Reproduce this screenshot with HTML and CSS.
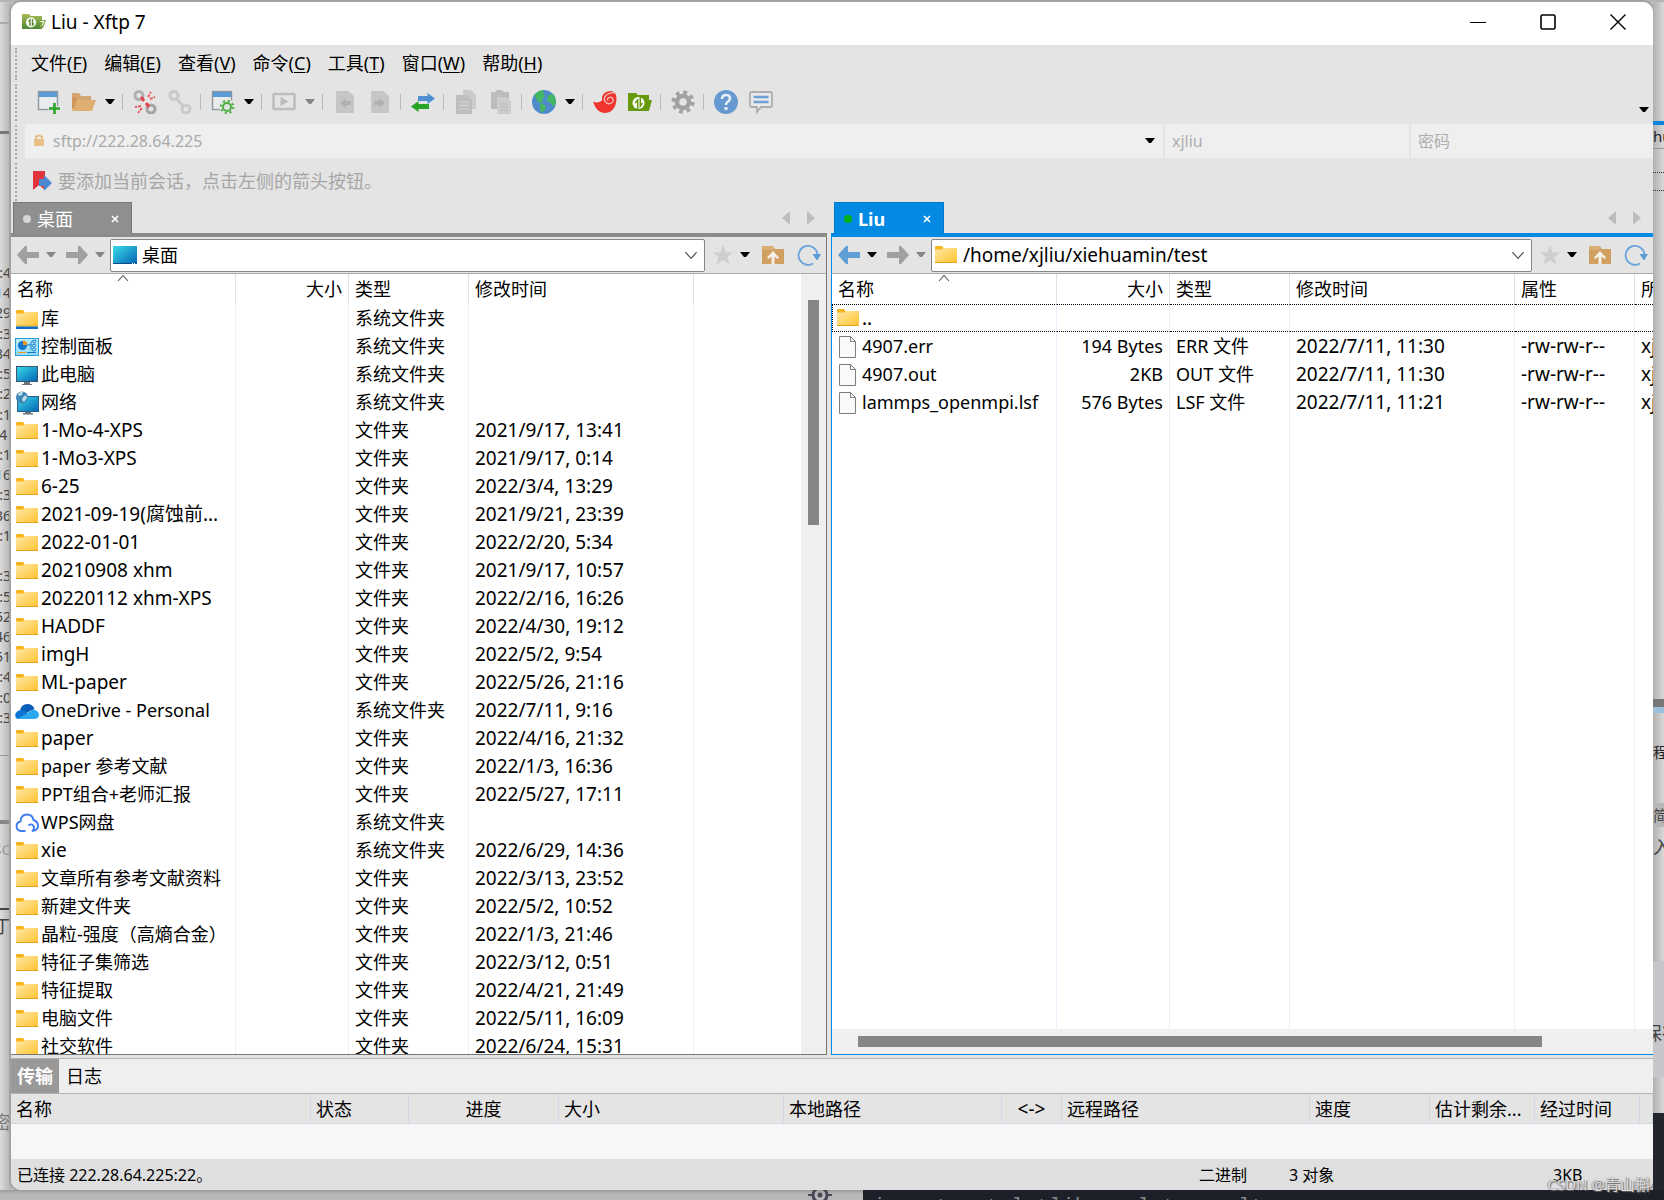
FILE: index.html
```html
<!DOCTYPE html>
<html lang="zh-CN">
<head>
<meta charset="utf-8">
<title>Liu - Xftp 7</title>
<meta name="viewport" content="width=device-width, initial-scale=1">
<link rel="stylesheet" href="styles.css">
</head>
<body>
<svg class="defs" width="0" height="0" aria-hidden="true">
  <defs>
    <linearGradient id="gFolder" x1="0" y1="0" x2="1" y2="1"><stop offset="0" stop-color="#ffe8a6"/><stop offset="1" stop-color="#fdc32f"/></linearGradient>
    <linearGradient id="gScreen" x1="0" y1="0" x2="1" y2="1"><stop offset="0" stop-color="#38dbe8"/><stop offset="1" stop-color="#0563b5"/></linearGradient>
    <linearGradient id="gPanel" x1="0" y1="0" x2="0" y2="1"><stop offset="0" stop-color="#b7ecfc"/><stop offset="1" stop-color="#8fdcf8"/></linearGradient>
    <linearGradient id="gApp" x1="0" y1="0" x2="0" y2="1"><stop offset="0" stop-color="#a9bf5a"/><stop offset="1" stop-color="#4e8634"/></linearGradient>
  </defs>
  <symbol id="folder" viewBox="0 0 24 24"><path d="M1 4q0-1 1-1h6l1.500 2v5H1z" fill="#f5b31c"/><path d="M1 6.500h7L9.500 5H23v15H1z" fill="url(#gFolder)"/><path d="M1 19.500h22" stroke="#e8a41d"/></symbol>
  <symbol id="library" viewBox="0 0 24 24"><path d="M1 4q0-1 1-1h6l1.500 2v5H1z" fill="#f5b31c"/><path d="M1 6.500h7L9.500 5H23v14H1z" fill="url(#gFolder)"/><path d="M1 19h22" stroke="#e8a41d"/><path d="M1 19.500h22V22H1z" fill="#0a6cc4"/></symbol>
  <symbol id="panel" viewBox="0 0 24 24"><rect x=".5" y="3.500" width="23" height="17" fill="url(#gPanel)" stroke="#2a9ddd"/><circle cx="7.500" cy="10.500" r="4.500" fill="#1477cf"/><path d="M8 10V5.500a4.500 4.500 0 0 1 4.500 4.500z" fill="#f5951d"/><path d="M12 10h3l2-4h4M16 9v6" stroke="#1477cf" fill="none"/><circle cx="19.500" cy="6.500" r="1.500" fill="#b7ecfc" stroke="#1477cf"/><circle cx="19" cy="10.500" r="1.500" fill="#b7ecfc" stroke="#1477cf"/><circle cx="19" cy="14.500" r="1.500" fill="#b7ecfc" stroke="#1477cf"/><path d="M3 17.500h8" stroke="#f5951d"/><path d="M12 17.500h9" stroke="#1477cf"/></symbol>
  <symbol id="computer" viewBox="0 0 24 24"><path d="M9 18h6v3h2v1H7v-1h2z" fill="#6b7681"/><rect x="1.500" y="3.500" width="21" height="15" fill="url(#gScreen)" stroke="#3c566b"/></symbol>
  <symbol id="network" viewBox="0 0 24 24"><path d="M10 20h6v2h2v1.500H8V22h2z" fill="#6b7681"/><rect x="2.500" y="5.500" width="21" height="15" fill="url(#gScreen)" stroke="#2b5d85"/><circle cx="7" cy="6.500" r="6" fill="#3f87b5"/><path d="M3 3q3-3 5-2l-1 3-3 1zM8 6l3-2 1 3-3 4-2-2z" fill="#c2dfec"/></symbol>
  <symbol id="onedrive" viewBox="0 0 24 24"><path d="M5 12q1-7 7.500-7 5 0 7 5l-8 4z" fill="#0a5fb8"/><path d="M1 19q-2-4 1-6.500 3-2.500 7-1l7 5-8 3.500H4q-2 0-3-1z" fill="#1076d6"/><path d="M3 19.500 16 12q2-2 5-.5 3 1.500 3 4.500-.5 4-5 4H5z" fill="#2aa7ee"/></symbol>
  <symbol id="wps" viewBox="0 0 24 24"><path d="M10.500 20H6a4.800 4.800 0 0 1-.500-9.500Q6 3.500 12 3.500q5.500 0 6.500 5.500 4.500 1.500 4.500 6 0 4.500-6 5 3-2 1.500-5-2-3-5-.5" fill="none" stroke="#3f7df0" stroke-width="1.900"/></symbol>
  <symbol id="file" viewBox="0 0 24 24"><path d="M3.500 1.500h11l5 5v16h-16z" fill="#fafafa" stroke="#7d7d7d"/><path d="M14.500 1.500v5h5" fill="none" stroke="#7d7d7d"/></symbol>
  <symbol id="desktop" viewBox="0 0 24 24"><path d="M0 3h24v18H0z" fill="url(#gScreen)"/><path d="M0 20.500h24" stroke="#0c4f86"/><path d="M19 20.500h4" stroke="#fff" stroke-dasharray="1 1"/></symbol>
  <symbol id="caret" viewBox="0 0 10 6"><path d="M0 0h10L6 5H4z"/></symbol>
  <symbol id="chev" viewBox="0 0 12 8"><path d="m1 1 5 5.500L11 1" fill="none" stroke="#555" stroke-width="1.100"/></symbol>
  <symbol id="up" viewBox="0 0 12 8"><path d="M1 7l5-5.500L11 7" fill="none" stroke="#555" stroke-width="1.100"/></symbol>
  <symbol id="left" viewBox="0 0 24 24"><path d="M1 12 9 3h2v6h12v6H11v6H9z"/></symbol>
  <symbol id="right" viewBox="0 0 24 24"><path d="M23 12 15 3h-2v6H1v6h12v6h2z"/></symbol>
  <symbol id="star" viewBox="0 0 24 24"><path d="m12 2 2.800 7.200 7.200.3-5.600 4.500 2 7.500-6.400-4.300L5.600 21.500l2-7.500L2 9.500l7.200-.3z" fill="#cfcfcf"/></symbol>
  <symbol id="upfolder" viewBox="0 0 24 24"><path d="M1 3h11l2 3h9v15H1z" fill="#d8ae72"/><path d="M1 7h11l2-1h9v15H1z" fill="#d19f5f"/><path d="m12 8 6 6.500-1.500 1.500-3-2.500V22h-3v-8.500l-3 2.500L6 14.500z" fill="#f4efe8"/></symbol>
  <symbol id="refresh" viewBox="0 0 24 24"><path d="M16 20.500A9.500 9.500 0 1 1 20.500 11" fill="none" stroke="#6aa3dc" stroke-width="1.800"/><path d="M15.500 11H24l-3.500 6h-1z" fill="#5b9bd8"/></symbol>
  <symbol id="x" viewBox="0 0 8 8"><path d="m1 1 6 6M7 1 1 7" stroke="currentColor" stroke-width="1.600"/></symbol>
</svg>

<div class="desk">
  <div class="edge-top"></div>
  <aside class="edge-left" aria-hidden="true">
    <div class="el-top"></div>
    <div class="el-bar"></div>
    <div class="times"><span>:4</span><span>14</span><span>29</span><span>:3</span><span>34</span><span>:5</span><span>:2</span><span>:1</span><span>4&nbsp;</span><span>:1</span><span>16</span><span>:3</span><span>36</span><span>:1</span><span></span><span>:3</span><span>:5</span><span>52</span><span>46</span><span>51</span><span>:4</span><span>:0</span><span>:3</span></div>
    <div class="el-a"></div><div class="el-b"></div><div class="el-c">SC</div><div class="el-d"></div><div class="el-e">丁</div><div class="el-f">密</div>
  </aside>

  <main class="win">
    <header class="title">
      <svg width="24" height="20" viewBox="0 0 24 20"><path d="M0 2h7l2 2h11v13H0z" fill="url(#gApp)"/><circle cx="9" cy="10.500" r="5" fill="#fff"/><path d="M8 14V8L6.500 9.500M10.500 7v6l1.500-1.500" stroke="#5d8f38" stroke-width="1.400" fill="none"/><path d="M18 8h6l-3 8h-3z" fill="#7fa545"/><path d="M18.500 9.500H22l-2 4" stroke="#fff" fill="none"/></svg>
      <h1>Liu - Xftp 7</h1>
      <div class="wctl">
        <button aria-label="最小化"><svg width="16" height="16"><path d="M0 8.500h16" stroke="#000"/></svg></button>
        <button aria-label="最大化"><svg width="16" height="16"><rect x="1" y="1" width="14" height="14" rx="1.500" fill="none" stroke="#000" stroke-width="1.600"/></svg></button>
        <button aria-label="关闭"><svg width="16" height="16"><path d="m.5.5 15 15M15.500.5l-15 15" stroke="#000" stroke-width="1.400"/></svg></button>
      </div>
    </header>

    <nav class="menu grip">
      <button>文件(<u>F</u>)</button><button>编辑(<u>E</u>)</button><button>查看(<u>V</u>)</button><button>命令(<u>C</u>)</button><button>工具(<u>T</u>)</button><button>窗口(<u>W</u>)</button><button>帮助(<u>H</u>)</button>
    </nav>

    <div class="tools grip" role="toolbar">
      <button aria-label="新建"><svg viewBox="0 0 24 24"><rect x="1.500" y="1.500" width="19" height="18" fill="#e9ecee" stroke="#8f979c" stroke-width="1.400"/><path d="M2 2h18v5H2z" fill="#5b9bd5"/><path d="M17.500 12.500v12M11.500 18.500h12" stroke="#e4e4e4" stroke-width="5"/><path d="M17.500 13v11M12 18.500h11" stroke="#28a428" stroke-width="2.600"/></svg></button>
      <button aria-label="打开"><svg viewBox="0 0 24 24"><path d="M0 3h7l2 3h10v5H0z" fill="#d3a672"/><path d="M0 7h5v12H0z" fill="#cf955a"/><path d="M5 10h19l-4 11H0z" fill="#dfae70"/></svg></button>
      <button class="dd" aria-label="打开列表"><svg class="ca"><use href="#caret"/></svg></button><i></i>
      <button aria-label="断开"><svg viewBox="0 0 24 24" fill="none"><circle cx="6" cy="5.500" r="4" stroke="#b0b0b0" stroke-width="3"/><circle cx="18" cy="19" r="4" stroke="#a4a4a4" stroke-width="3"/><path d="m8 7 3 4M13 13l3 4" stroke="#e0464b" stroke-width="3"/><path d="m15 7 3-5M17 9l5-2M8 16l-6 1M9 18l-4 5" stroke="#ea5b60" stroke-width="2" stroke-dasharray="3 1"/></svg></button>
      <button aria-label="重新连接"><svg viewBox="0 0 24 24" fill="none" stroke="#c9c9c9" stroke-width="3"><circle cx="6" cy="5.500" r="4"/><circle cx="18" cy="19" r="4"/><path d="m8 8 7 8"/></svg></button><i></i>
      <button aria-label="属性"><svg viewBox="0 0 24 24"><rect x="1.500" y="1.500" width="19" height="18" fill="#e9ecee" stroke="#8f979c" stroke-width="1.400"/><path d="M2 2h18v5H2z" fill="#5b9bd5"/><circle cx="16" cy="17" r="8" fill="#e4e4e4"/><circle cx="16" cy="17" r="4" fill="none" stroke="#4caf3f" stroke-width="2"/><circle cx="16" cy="17" r="6.200" fill="none" stroke="#4caf3f" stroke-width="2.200" stroke-dasharray="2 2.870"/></svg></button>
      <button class="dd" aria-label="属性列表"><svg class="ca"><use href="#caret"/></svg></button><i></i>
      <button aria-label="运行"><svg viewBox="0 0 24 24"><rect x="1.500" y="4" width="21" height="15" rx="1" fill="none" stroke="#bdbdbd" stroke-width="2.600"/><path d="m8.500 7 8 4.500-8 4.500z" fill="#bdbdbd"/></svg></button>
      <button class="dd dim" aria-label="运行列表"><svg class="ca"><use href="#caret"/></svg></button><i></i>
      <button aria-label="下载"><svg viewBox="0 0 24 24"><path d="M3 1h12l6 5v17H3z" fill="#c6c6c6"/><path d="M7 13l6-5v3h5v4h-5v3z" fill="#b1b1b1"/></svg></button>
      <button aria-label="上传"><svg viewBox="0 0 24 24"><path d="M3 1h12l6 5v17H3z" fill="#c6c6c6"/><path d="M17 13l-6-5v3H6v4h5v3z" fill="#b1b1b1"/></svg></button><i></i>
      <button aria-label="同步"><svg viewBox="0 0 24 24"><path d="M24 8.500 16.500 3v3H7v5h9.500v3z" fill="#4f8fd2"/><path d="M0 16.500 7.500 11v3H18v5H7.500v3z" fill="#28a428"/></svg></button><i></i>
      <button aria-label="复制"><svg viewBox="0 0 24 24"><path d="M9 0h8l5 5v14H9z" fill="#cbcbcb"/><path d="M2 5h10l6 5v14H2z" fill="#bfbfbf"/><path d="M5 12h10M5 15.500h10M5 19h10" stroke="#d6d6d6"/></svg></button>
      <button aria-label="粘贴"><svg viewBox="0 0 24 24"><path d="M2 2h4l2-2h5l2 2h5v17H2z" fill="#bcbcbc"/><path d="M8 7h9l5 4v13H8z" fill="#cdcdcd"/><path d="M11 14h8M11 17h8M11 20h8" stroke="#b9b9b9"/></svg></button><i></i>
      <button aria-label="语言"><svg viewBox="0 0 24 24"><circle cx="12" cy="12" r="12" fill="#4f8acb"/><path d="M2.500 4.500Q7 0 12 0l-1 3 2 3-3 3 1 2-2 2-4-2zM16 6l4-2 2 1q2 4 2 8l-3 4-2-4-4-2zM8 13l5 2 1 4-4 4-2-4z" fill="#45b764"/></svg></button>
      <button class="dd" aria-label="语言列表"><svg class="ca"><use href="#caret"/></svg></button><i></i>
      <button aria-label="Xshell"><svg viewBox="0 0 24 24"><path d="M0 11.500q5 2.500 9-1Q8 2 17 1q7 0 6.500 9Q22 23 11 23 3 22 0 11.500z" fill="#ee342c"/><path d="M23 3q-5-1-9 1.500-4 3-2 7 2 3 5.500 2 3.500-1.500 2.500-4.500-1.500-2.500-4-1.500-2 1-1 3" fill="none" stroke="#f0c0bd" stroke-width="1.300"/></svg></button>
      <button aria-label="Xftp"><svg viewBox="0 0 24 24"><path d="M0 3h8l2 2h11v5h3l-3 11H0z" fill="#669a0c"/><circle cx="10.500" cy="13" r="6" fill="#fff"/><path d="M9.700 19.500V10L7 13M12.300 6.500V16l2.200-3" fill="none" stroke="#669a0c" stroke-width="1.500"/></svg></button><i></i>
      <button aria-label="选项"><svg viewBox="0 0 24 24" fill="none" stroke="#a1a1a1"><circle cx="12" cy="12" r="6" stroke-width="4.500"/><circle cx="12" cy="12" r="9.800" stroke-width="3.500" stroke-dasharray="3.800 3.900"/></svg></button><i></i>
      <button aria-label="帮助"><svg viewBox="0 0 24 24"><circle cx="12" cy="12" r="12" fill="#6699cf"/><path d="M8 9q0-4 4-4t4 3.500q0 2-2.500 3.500-1.500 1-1.500 3" fill="none" stroke="#e6eef6" stroke-width="2.600"/><path d="M10.500 17h3v3h-3z" fill="#e6eef6"/></svg></button>
      <button aria-label="反馈"><svg viewBox="0 0 24 24"><path d="M3 2h18q2 0 2 2v11q0 2-2 2H12l-4 5v-5H3q-2 0-2-2V4q0-2 2-2z" fill="#e9e9e9" stroke="#adadad" stroke-width="1.800"/><path d="M4.500 7h15M4.500 12h15" stroke="#6fa0d6" stroke-width="2.600"/></svg></button>
      <button class="dd more" aria-label="更多"><svg class="ca"><use href="#caret"/></svg></button>
    </div>

    <form class="addr grip">
      <label class="host"><svg width="12" height="14" viewBox="0 0 12 14"><path d="M3 6V4q0-2.500 3-2.500T9 4v2" fill="none" stroke="#e6bd83" stroke-width="2"/><rect x="1" y="5" width="10" height="7" rx="1" fill="#e8bf84"/></svg><input aria-label="主机" value="sftp://222.28.64.225"><svg class="ca"><use href="#caret"/></svg></label>
      <input class="user" aria-label="用户名" value="xjliu">
      <input class="pass" aria-label="密码" placeholder="密码">
    </form>

    <div class="hint grip"><svg width="20" height="22" viewBox="0 0 20 22"><path d="M1 1h12v19l-6-5-6 5z" fill="#e0343c"/><path d="M7 9h5V5l8 8-8 8v-5H7z" fill="#4a88cf"/></svg><span>要添加当前会话，点击左侧的箭头按钮。</span></div>

    <div class="panes">
      <section class="pane local">
        <div class="tabs"><div class="tab"><span class="dot"></span><span>桌面</span><button aria-label="关闭标签"><svg width="8" height="8"><use href="#x"/></svg></button></div>
          <div class="tnav"><svg width="8" height="14"><path d="M8 0v14L0 7z"/></svg><svg width="8" height="14"><path d="M0 0v14l8-7z"/></svg></div></div>
        <div class="path">
          <button class="gray" aria-label="后退"><svg class="ic"><use href="#left"/></svg></button><button class="dd dim" aria-label="后退列表"><svg class="ca"><use href="#caret"/></svg></button>
          <button class="gray fw" aria-label="前进"><svg class="ic"><use href="#right"/></svg></button><button class="dd dim" aria-label="前进列表"><svg class="ca"><use href="#caret"/></svg></button>
          <label class="combo"><svg class="ic"><use href="#desktop"/></svg><select aria-label="本地路径"><option>桌面</option></select><svg class="ch"><use href="#chev"/></svg></label>
          <button aria-label="收藏"><svg class="ic"><use href="#star"/></svg></button><button class="dd fav" aria-label="收藏列表"><svg class="ca"><use href="#caret"/></svg></button>
          <button class="upb" aria-label="上一级"><svg class="ic"><use href="#upfolder"/></svg></button><button class="rf" aria-label="刷新"><svg class="ic"><use href="#refresh"/></svg></button>
        </div>
        <div class="list">
          <div class="scroller">
          <table>
            <colgroup><col class="w-name"><col class="w-size"><col class="w-type"><col class="w-time"><col></colgroup>
            <thead><tr><th>名称<svg class="sort"><use href="#up"/></svg></th><th class="r">大小</th><th>类型</th><th>修改时间</th><th></th></tr></thead>
            <tbody>
              <tr><td><svg class="ic"><use href="#library"/></svg>库</td><td></td><td>系统文件夹</td><td class="n"></td><td></td></tr>
              <tr><td><svg class="ic"><use href="#panel"/></svg>控制面板</td><td></td><td>系统文件夹</td><td class="n"></td><td></td></tr>
              <tr><td><svg class="ic"><use href="#computer"/></svg>此电脑</td><td></td><td>系统文件夹</td><td class="n"></td><td></td></tr>
              <tr><td><svg class="ic"><use href="#network"/></svg>网络</td><td></td><td>系统文件夹</td><td class="n"></td><td></td></tr>
              <tr><td class="n"><svg class="ic"><use href="#folder"/></svg>1-Mo-4-XPS</td><td></td><td>文件夹</td><td class="n">2021/9/17, 13:41</td><td></td></tr>
              <tr><td class="n"><svg class="ic"><use href="#folder"/></svg>1-Mo3-XPS</td><td></td><td>文件夹</td><td class="n">2021/9/17, 0:14</td><td></td></tr>
              <tr><td class="n"><svg class="ic"><use href="#folder"/></svg>6-25</td><td></td><td>文件夹</td><td class="n">2022/3/4, 13:29</td><td></td></tr>
              <tr><td class="n"><svg class="ic"><use href="#folder"/></svg>2021-09-19(腐蚀前...</td><td></td><td>文件夹</td><td class="n">2021/9/21, 23:39</td><td></td></tr>
              <tr><td class="n"><svg class="ic"><use href="#folder"/></svg>2022-01-01</td><td></td><td>文件夹</td><td class="n">2022/2/20, 5:34</td><td></td></tr>
              <tr><td class="n"><svg class="ic"><use href="#folder"/></svg>20210908 xhm</td><td></td><td>文件夹</td><td class="n">2021/9/17, 10:57</td><td></td></tr>
              <tr><td class="n"><svg class="ic"><use href="#folder"/></svg>20220112 xhm-XPS</td><td></td><td>文件夹</td><td class="n">2022/2/16, 16:26</td><td></td></tr>
              <tr><td class="n"><svg class="ic"><use href="#folder"/></svg>HADDF</td><td></td><td>文件夹</td><td class="n">2022/4/30, 19:12</td><td></td></tr>
              <tr><td class="n"><svg class="ic"><use href="#folder"/></svg>imgH</td><td></td><td>文件夹</td><td class="n">2022/5/2, 9:54</td><td></td></tr>
              <tr><td class="n"><svg class="ic"><use href="#folder"/></svg>ML-paper</td><td></td><td>文件夹</td><td class="n">2022/5/26, 21:16</td><td></td></tr>
              <tr><td><svg class="ic"><use href="#onedrive"/></svg>OneDrive - Personal</td><td></td><td>系统文件夹</td><td class="n">2022/7/11, 9:16</td><td></td></tr>
              <tr><td class="n"><svg class="ic"><use href="#folder"/></svg>paper</td><td></td><td>文件夹</td><td class="n">2022/4/16, 21:32</td><td></td></tr>
              <tr><td><svg class="ic"><use href="#folder"/></svg>paper 参考文献</td><td></td><td>文件夹</td><td class="n">2022/1/3, 16:36</td><td></td></tr>
              <tr><td><svg class="ic"><use href="#folder"/></svg>PPT组合+老师汇报</td><td></td><td>文件夹</td><td class="n">2022/5/27, 17:11</td><td></td></tr>
              <tr><td><svg class="ic"><use href="#wps"/></svg>WPS网盘</td><td></td><td>系统文件夹</td><td class="n"></td><td></td></tr>
              <tr><td class="n"><svg class="ic"><use href="#folder"/></svg>xie</td><td></td><td>系统文件夹</td><td class="n">2022/6/29, 14:36</td><td></td></tr>
              <tr><td><svg class="ic"><use href="#folder"/></svg>文章所有参考文献资料</td><td></td><td>文件夹</td><td class="n">2022/3/13, 23:52</td><td></td></tr>
              <tr><td><svg class="ic"><use href="#folder"/></svg>新建文件夹</td><td></td><td>文件夹</td><td class="n">2022/5/2, 10:52</td><td></td></tr>
              <tr><td><svg class="ic"><use href="#folder"/></svg>晶粒-强度（高熵合金）</td><td></td><td>文件夹</td><td class="n">2022/1/3, 21:46</td><td></td></tr>
              <tr><td><svg class="ic"><use href="#folder"/></svg>特征子集筛选</td><td></td><td>文件夹</td><td class="n">2022/3/12, 0:51</td><td></td></tr>
              <tr><td><svg class="ic"><use href="#folder"/></svg>特征提取</td><td></td><td>文件夹</td><td class="n">2022/4/21, 21:49</td><td></td></tr>
              <tr><td><svg class="ic"><use href="#folder"/></svg>电脑文件</td><td></td><td>文件夹</td><td class="n">2022/5/11, 16:09</td><td></td></tr>
              <tr><td><svg class="ic"><use href="#folder"/></svg>社交软件</td><td></td><td>文件夹</td><td class="n">2022/6/24, 15:31</td><td></td></tr>
            </tbody>
          </table>
          </div>
          <div class="vbar"><div></div></div>
        </div>
      </section>

      <section class="pane remote">
        <div class="tabs"><div class="tab"><span class="dot"></span><b>Liu</b><button aria-label="关闭标签"><svg width="8" height="8"><use href="#x"/></svg></button></div>
          <div class="tnav"><svg width="8" height="14"><path d="M8 0v14L0 7z"/></svg><svg width="8" height="14"><path d="M0 0v14l8-7z"/></svg></div></div>
        <div class="path">
          <button class="blue" aria-label="后退"><svg class="ic"><use href="#left"/></svg></button><button class="dd" aria-label="后退列表"><svg class="ca"><use href="#caret"/></svg></button>
          <button class="gray fw" aria-label="前进"><svg class="ic"><use href="#right"/></svg></button><button class="dd dim" aria-label="前进列表"><svg class="ca"><use href="#caret"/></svg></button>
          <label class="combo"><svg class="ic"><use href="#folder"/></svg><select class="n" aria-label="远程路径"><option>/home/xjliu/xiehuamin/test</option></select><svg class="ch"><use href="#chev"/></svg></label>
          <button aria-label="收藏"><svg class="ic"><use href="#star"/></svg></button><button class="dd fav" aria-label="收藏列表"><svg class="ca"><use href="#caret"/></svg></button>
          <button class="upb" aria-label="上一级"><svg class="ic"><use href="#upfolder"/></svg></button><button class="rf" aria-label="刷新"><svg class="ic"><use href="#refresh"/></svg></button>
        </div>
        <div class="list col">
          <div class="scroller">
          <table class="fill">
            <colgroup><col class="w-name"><col class="w-size"><col class="w-type"><col class="w-time"><col class="w-attr"><col></colgroup>
            <thead><tr><th>名称<svg class="sort"><use href="#up"/></svg></th><th class="r">大小</th><th>类型</th><th>修改时间</th><th>属性</th><th class="cut">所有者</th></tr></thead>
            <tbody>
              <tr class="focus"><td class="n"><svg class="ic"><use href="#folder"/></svg>..</td><td></td><td></td><td></td><td></td><td></td></tr>
              <tr><td><svg class="ic"><use href="#file"/></svg>4907.err</td><td class="r">194 Bytes</td><td>ERR 文件</td><td class="n">2022/7/11, 11:30</td><td class="n">-rw-rw-r--</td><td class="n">xjliu</td></tr>
              <tr><td><svg class="ic"><use href="#file"/></svg>4907.out</td><td class="r">2KB</td><td>OUT 文件</td><td class="n">2022/7/11, 11:30</td><td class="n">-rw-rw-r--</td><td class="n">xjliu</td></tr>
              <tr><td><svg class="ic"><use href="#file"/></svg>lammps_openmpi.lsf</td><td class="r">576 Bytes</td><td>LSF 文件</td><td class="n">2022/7/11, 11:21</td><td class="n">-rw-rw-r--</td><td class="n">xjliu</td></tr>
              <tr class="rest"><td></td><td></td><td></td><td></td><td></td><td></td></tr>
            </tbody>
          </table>
          </div>
          <div class="hbar"><div></div></div>
        </div>
      </section>
    </div>

    <section class="transfer">
      <div class="ttabs"><button class="on">传输</button><button>日志</button></div>
      <table>
        <colgroup><col class="t1"><col class="t2"><col class="t3"><col class="t4"><col class="t5"><col class="t6"><col class="t7"><col class="t8"><col class="t9"><col class="t9"><col></colgroup>
        <thead><tr><th>名称</th><th>状态</th><th class="c">进度</th><th>大小</th><th>本地路径</th><th class="c n">&lt;-&gt;</th><th>远程路径</th><th>速度</th><th>估计剩余...</th><th>经过时间</th><th></th></tr></thead>
      </table>
      <div class="empty"></div>
    </section>

    <footer class="status"><span class="s0">已连接 222.28.64.225:22。</span><span class="s1">二进制</span><span class="s2">3 对象</span><span class="s3">3KB</span></footer>
  </main>

  <aside class="edge-right" aria-hidden="true">
    <div class="er-a"></div><div class="er-b">huamin</div><div class="er-c"></div><div class="er-c2"></div><div class="er-d"></div><div class="er-e">程路径</div><div class="er-f"></div><div class="er-g">简</div><div class="er-h">入</div><div class="er-i">保存</div><div class="er-j"></div><div class="er-k"></div>
  </aside>
  <div class="edge-bottom" aria-hidden="true">
    <div class="eb-l"><svg width="24" height="24" viewBox="0 0 24 24"><circle cx="12" cy="5" r="7" fill="none" stroke="#474756" stroke-width="3"/><circle cx="12" cy="5" r="2.500" fill="#474756"/><path d="M0 5h5M19 5h5" stroke="#474756" stroke-width="2"/></svg></div>
    <div class="eb-r">import matplotlib.pyplot as plt</div>
  </div>
  <div class="mark">CSDN @青山槲</div>
</div>
</body>
</html>
```
FILE: styles.css
```css
* { box-sizing: border-box; }
body {
  margin: 0;
  font: 18px/24px "Noto Sans", "Noto Sans CJK SC", sans-serif;
  color: #000;
  background: #c4c4c4;
}
.defs { position: absolute; }
button, input, select {
  font: inherit;
  color: inherit;
  background: none;
  border: 0;
  padding: 0;
  margin: 0;
  min-width: 0;
}
svg { flex: none; display: block; }
.ic { width: 24px; height: 24px; }
.ca { width: 10px; height: 6px; }
.ch { width: 14px; height: 9px; }
.n { font-size: 19px; }

/* windows behind the application */
.desk {
  position: relative;
  display: grid;
  grid-template: 2px minmax(0, 1fr) 10px / 11px minmax(0, 1fr) 11px;
  height: 100vh;
  overflow: hidden;
}
.edge-top { grid-column: 1 / 4; background: #b4b4b4; }
.edge-left, .edge-right {
  display: flex;
  flex-direction: column;
  overflow: hidden;
  white-space: nowrap;
  color: #444;
}
.edge-left { background: linear-gradient(90deg, #dcdcdc, #b2b2b2); }
.el-top { height: 38px; border-bottom: 2px solid #aaa; margin-top: -16px; }
.el-bar { height: 104px; margin-top: 6px; border-bottom: 3px solid #777; }
.times {
  display: flex;
  flex-direction: column;
  height: 465px;
  margin-top: 129px;
  align-items: flex-end;
  font-size: 14px;
  line-height: 20px;
}
.times span { flex: 1; }
.el-a { height: 24px; border-bottom: 1px solid #999; margin-top: 4px; }
.el-b { height: 68px; border-bottom: 4px solid #888; }
.el-c { height: 40px; line-height: 50px; font-size: 15px; color: #999; direction: rtl; }
.el-d { height: 46px; border-bottom: 2px solid #444; }
.el-e { line-height: 32px; direction: rtl; }
.el-f { margin-top: 162px; line-height: 36px; direction: rtl; color: #777; }

.edge-right { background: linear-gradient(90deg, #b0b0b0, #d8d8d8); font-size: 15px; }
.er-a { height: 123px; border-bottom: 4px solid #0a84d8; }
.er-b { height: 24px; line-height: 22px; color: #222; border-bottom: 1px solid #999; }
.er-c { height: 24px; border-bottom: 1px dotted #333; }
.er-c2 { height: 18px; border-bottom: 1px dotted #333; }
.er-d { height: 516px; border-bottom: 8px solid #777; }
.er-e { height: 52px; padding-top: 29px; line-height: 20px; border-top: 6px solid #9cc1dc; color: #222; }
.er-f { height: 44px; }
.er-g { height: 24px; line-height: 24px; background: #b6b6b6; }
.er-h { height: 134px; line-height: 40px; font-size: 18px; }
.er-i { height: 116px; padding-top: 60px; background: #c5c5ca; font-size: 18px; text-indent: -9px; }
.er-j { height: 36px; }
.er-k { flex: 1; background: #22252e; }

.edge-bottom { grid-column: 1 / 4; display: grid; grid-template-columns: 863px minmax(0, 1fr); overflow: hidden; }
.eb-l { display: flex; justify-content: flex-end; padding-right: 31px; background: linear-gradient(#999, #b8b8b8 4px); }
.eb-r {
  padding-left: 10px;
  background: #1d2029;
  color: #84868d;
  font: 21px/34px "Liberation Mono", monospace;
  white-space: nowrap;
}
.mark {
  position: absolute;
  right: 14px;
  bottom: 4px;
  font-size: 15px;
  line-height: 24px;
  color: #d9d9d9;
  text-shadow: 1px 1px 1px #666, -1px 0 1px #999;
}

/* application window */
.win {
  display: flex;
  flex-direction: column;
  min-width: 0;
  overflow: hidden;
  background: #e4e4e4;
  border-radius: 10px;
  box-shadow: 0 0 0 2px #a3a3a3;
}
.title { display: flex; align-items: center; flex: none; height: 43px; padding: 0 0 3px 11px; background: #fff; }
.title h1 { flex: 1; margin: 0 0 0 5px; font-size: 19px; font-weight: 400; }
.wctl { display: flex; }
.wctl button { display: grid; place-items: center; width: 70px; height: 40px; }

.grip { position: relative; padding-left: 20px; display: flex; align-items: center; flex: none; }
.grip::before {
  content: "";
  position: absolute;
  left: 4px;
  top: 3px;
  bottom: 1px;
  border-left: 2px dotted #aaa;
}
.menu { height: 36px; gap: 17px; }
.menu button { white-space: nowrap; }
.menu u { text-underline-offset: 2px; text-decoration-thickness: 1px; }
.tools { height: 41px; }
.tools button { display: grid; place-items: center; width: 35px; height: 32px; }
.tools button svg { width: 24px; height: 24px; }
.tools .dd { width: 18px; }
.tools .dd svg { width: 10px; height: 6px; }
.tools .more { margin-left: auto; align-self: flex-end; height: 24px; }
.tools i { width: 8px; height: 16px; background: linear-gradient(#bbb, #bbb) 3px 0 / 1px 100% no-repeat; }
.dim { fill: #858585; }

.addr {
  display: grid;
  grid-template-columns: minmax(0, 1138fr) minmax(0, 244fr) minmax(0, 242fr);
  gap: 2px;
  height: 38px;
  padding-left: 14px;
  color: #adadad;
  font-size: 16px;
}
.host, .user, .pass { height: 34px; background: #efefef; }
.host { display: flex; align-items: center; gap: 8px; padding: 0 8px; color: #aaa; }
.host input { flex: 1; }
.host .ca { fill: #000; }
.user, .pass { padding: 0 7px; }
.pass::placeholder { color: #adadad; opacity: 1; }
.hint { height: 42px; padding-left: 21px; gap: 6px; color: #a6a6a6; }

/* file panes */
.panes { display: flex; flex: 1; gap: 4px; min-height: 0; }
.pane { display: flex; flex-direction: column; min-width: 0; }
.local { flex: 816 1 0; }
.remote { flex: 822 1 0; }
.tabs { display: flex; align-items: flex-start; flex: none; height: 35px; border-bottom: 4px solid #8b8b8b; }
.tab {
  display: flex;
  align-items: center;
  gap: 6px;
  width: 119px;
  height: 32px;
  margin-left: 2px;
  padding: 0 12px 0 9px;
  background: #8f8f8f;
  border: 1px solid #777;
  border-bottom: 0;
  color: #fff;
}
.tab button { margin-left: auto; }
.dot { width: 8px; height: 8px; border-radius: 4px; background: #d5d5d5; }
.remote .tabs { border-color: #058ae4; }
.remote .tab { width: 110px; margin-left: 3px; background: #058ae4; border-color: #0078cc; }
.remote .dot { background: #00b414; }
.tnav { display: flex; gap: 17px; margin: 9px 12px 0 auto; fill: #bdbdbd; }
.path { display: flex; align-items: center; flex: none; height: 37px; padding: 0 5px; border-bottom: 1px solid #aaa; }
.local .path, .local .list { border-right: 1px solid #777; }
.remote .path, .remote .list { border-left: 1px solid #058ae4; }
.path button { display: grid; place-items: center; width: 24px; height: 30px; }
.path .dd { width: 20px; margin-left: 1px; }
.path .fw { margin-left: 4px; }
.path .fav { margin-left: 0; }
.path .upb { margin-left: 6px; }
.path .rf { margin-left: 12px; }
.gray { fill: #a0a0a0; }
.blue { fill: #5f9fd6; }
.combo {
  display: flex;
  align-items: center;
  flex: 1;
  gap: 5px;
  min-width: 0;
  height: 33px;
  margin: 0 6px 0 0;
  padding: 0 6px 0 2px;
  background: #fff;
  border: 1px solid #858585;
  border-radius: 2px;
}
.combo select { flex: 1; height: 30px; appearance: none; }
.list { display: flex; flex: 1; min-height: 0; background: #fff; border-bottom: 1px solid #777; }
.remote .list { border-bottom-color: #058ae4; }
.col { flex-direction: column; }
.scroller { flex: 1; min-width: 0; min-height: 0; overflow: hidden; }
.vbar { width: 25px; padding: 26px 7px 0; background: #efefef; }
.vbar div { height: 225px; background: #858585; }
.hbar { height: 25px; padding: 7px 111px 7px 26px; background: #efefef; }
.hbar div { height: 11px; background: #858585; }

table { width: 100%; table-layout: fixed; border-collapse: separate; border-spacing: 0; }
.fill { height: 100%; }
th, td { overflow: hidden; white-space: nowrap; text-align: left; font-weight: 400; padding: 0 6px; }
.list th { position: relative; height: 30px; border-right: 1px solid #e2e2e2; }
.list td { height: 28px; line-height: 26px; border-right: 1px solid #e6f1fb; }
.list th:last-child, .list td:last-child { border-right: 0; }
.list td:first-child { padding: 0 0 0 4px; }
.list td .ic { display: inline-block; vertical-align: middle; margin: -2px 2px 0 0; }
.list .rest td { height: auto; }
.list .r { text-align: right; }
.sort { position: absolute; left: 106px; top: 0; width: 12px; height: 8px; }
.focus td { border-top: 1px dotted #000; border-bottom: 1px dotted #000; line-height: 24px; }
.focus td:first-child { border-left: 1px dotted #000; padding-left: 3px; }
.w-name { width: 225px; }
.w-size { width: 113px; }
.w-type { width: 120px; }
.w-time { width: 225px; }
.w-attr { width: 120px; }

/* transfer queue */
.transfer { flex: none; margin-top: 3px; border-top: 1px solid #b2b2b2; }
.ttabs { display: flex; height: 35px; background: #efefef; border-bottom: 1px solid #b2b2b2; }
.ttabs button { padding: 0 7px; }
.ttabs .on { padding: 0 6px; background: #999; color: #fff; font-weight: 700; }
.transfer th { height: 30px; padding: 0 5px; border-right: 1px solid #d0dae6; border-bottom: 1px solid #d0dae6; }
.transfer .c { text-align: center; }
.empty { height: 35px; background: #f7f7f7; }
.t1 { width: 300px; }
.t2 { width: 98px; }
.t3 { width: 150px; }
.t4 { width: 225px; }
.t5 { width: 218px; }
.t6 { width: 60px; }
.t7 { width: 248px; }
.t8 { width: 120px; }
.t9 { width: 105px; }

.status { display: flex; align-items: center; flex: none; height: 31px; padding-left: 6px; background: #dfdfdf; font-size: 16px; }
.s0 { flex: 1; }
.s1 { width: 90px; }
.s2 { width: 264px; }
.s3 { width: 100px; }
```
